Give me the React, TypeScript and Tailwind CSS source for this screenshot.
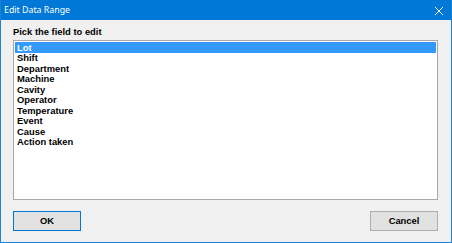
import React from "react";

const items = [
  "Lot",
  "Shift",
  "Department",
  "Machine",
  "Cavity",
  "Operator",
  "Temperature",
  "Event",
  "Cause",
  "Action taken",
];

export default function App() {
  return (
    <div className="w-[452px] h-[243px] bg-[#f0f0f0] border-x border-b border-[#1a83d8] flex flex-col overflow-hidden">
      <div className="h-[20px] -mx-px bg-[#0078d7] flex items-center justify-between pl-[4px] pr-[8px] shrink-0">
        <span
          className="text-white text-[8.8px] leading-none"
          style={{ fontFamily: '"Noto Sans", sans-serif' }}
        >
          Edit Data Range
        </span>
        <svg width="10" height="10" viewBox="0 0 10 10" className="mt-[1px]">
          <path d="M1 1 L9 9 M9 1 L1 9" stroke="white" strokeWidth="1" fill="none" />
        </svg>
      </div>
      <div
        className="flex-1 flex flex-col pl-[12px] pt-[6px]"
        style={{ fontFamily: '"Liberation Sans", Arial, sans-serif' }}
      >
        <div className="text-[9.4px] font-bold leading-[12px] text-black h-[14px]">
          Pick the field to edit
        </div>
        <div className="w-[425px] h-[160px] bg-white border border-[#a9a9a9] p-px">
          {items.map((it, i) => (
            <div
              key={it}
              className={
                "h-[10.55px] flex items-center pl-[2px] text-[9.4px] font-bold leading-none " +
                (i === 0 ? "bg-[#3399ff] text-white" : "text-black")
              }
            >
              {it}
            </div>
          ))}
        </div>
        <div className="w-[425px] flex justify-between mt-[11px]">
          <button className="w-[68px] h-[20px] bg-[#e1e1e1] border border-[#0078d7] text-[9.4px] font-bold text-black leading-none">
            OK
          </button>
          <button className="w-[68px] h-[20px] bg-[#e1e1e1] border border-[#adadad] text-[9.4px] font-bold text-black leading-none">
            Cancel
          </button>
        </div>
      </div>
    </div>
  );
}
